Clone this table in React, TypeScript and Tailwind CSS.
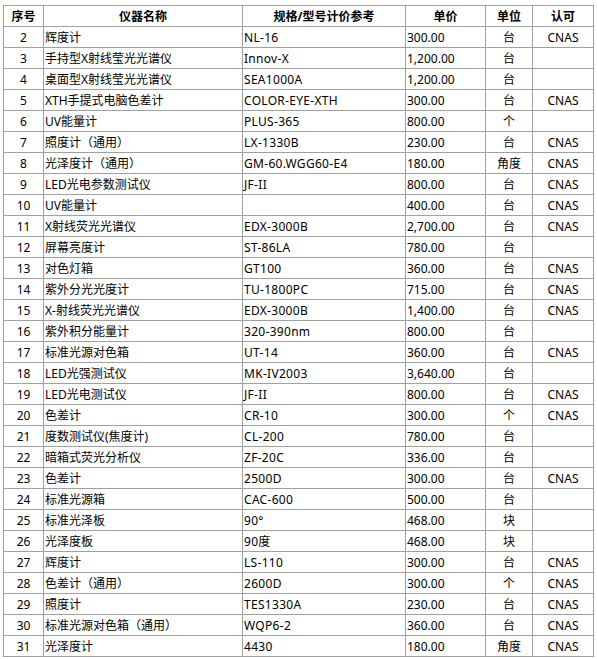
const rows: [string, string, string, string, string, string][] = [
  ['2', '辉度计', 'NL-16', '300.00', '台', 'CNAS'],
  ['3', '手持型X射线莹光光谱仪', 'Innov-X', '1,200.00', '台', ''],
  ['4', '桌面型X射线莹光光谱仪', 'SEA1000A', '1,200.00', '台', ''],
  ['5', 'XTH手提式电脑色差计', 'COLOR-EYE-XTH', '300.00', '台', 'CNAS'],
  ['6', 'UV能量计', 'PLUS-365', '800.00', '个', ''],
  ['7', '照度计（通用）', 'LX-1330B', '230.00', '台', 'CNAS'],
  ['8', '光泽度计（通用）', 'GM-60.WGG60-E4', '180.00', '角度', 'CNAS'],
  ['9', 'LED光电参数测试仪', 'JF-II', '800.00', '台', 'CNAS'],
  ['10', 'UV能量计', '', '400.00', '台', 'CNAS'],
  ['11', 'X射线荧光光谱仪', 'EDX-3000B', '2,700.00', '台', 'CNAS'],
  ['12', '屏幕亮度计', 'ST-86LA', '780.00', '台', ''],
  ['13', '对色灯箱', 'GT100', '360.00', '台', 'CNAS'],
  ['14', '紫外分光光度计', 'TU-1800PC', '715.00', '台', 'CNAS'],
  ['15', 'X-射线荧光光谱仪', 'EDX-3000B', '1,400.00', '台', 'CNAS'],
  ['16', '紫外积分能量计', '320-390nm', '800.00', '台', ''],
  ['17', '标准光源对色箱', 'UT-14', '360.00', '台', 'CNAS'],
  ['18', 'LED光强测试仪', 'MK-IV2003', '3,640.00', '台', ''],
  ['19', 'LED光电测试仪', 'JF-II', '800.00', '台', 'CNAS'],
  ['20', '色差计', 'CR-10', '300.00', '个', 'CNAS'],
  ['21', '度数测试仪(焦度计)', 'CL-200', '780.00', '台', ''],
  ['22', '暗箱式荧光分析仪', 'ZF-20C', '336.00', '台', ''],
  ['23', '色差计', '2500D', '300.00', '台', 'CNAS'],
  ['24', '标准光源箱', 'CAC-600', '500.00', '台', ''],
  ['25', '标准光泽板', '90°', '468.00', '块', ''],
  ['26', '光泽度板', '90度', '468.00', '块', ''],
  ['27', '辉度计', 'LS-110', '300.00', '台', 'CNAS'],
  ['28', '色差计（通用）', '2600D', '300.00', '个', 'CNAS'],
  ['29', '照度计', 'TES1330A', '230.00', '台', 'CNAS'],
  ['30', '标准光源对色箱（通用）', 'WQP6-2', '360.00', '台', 'CNAS'],
  ['31', '光泽度计', '4430', '180.00', '角度', 'CNAS'],
];

const cell = 'border border-[#a0a0a0] h-[21px] p-0 pt-[1px] leading-[19px] whitespace-nowrap overflow-hidden';

export default function App() {
  return (
    <div className="bg-white min-h-[659px] pt-[5px] pl-[3px]">
      <table
        className="table-fixed border-collapse w-[590px] text-[12px] text-black"
        style={{ fontFamily: '"Noto Sans", "Noto Sans CJK SC", sans-serif' }}
      >
        <colgroup>
          <col className="w-[40px]" />
          <col className="w-[199px]" />
          <col className="w-[163px]" />
          <col className="w-[80px]" />
          <col className="w-[47px]" />
          <col className="w-[61px]" />
        </colgroup>
        <thead>
          <tr className="font-bold">
            <th className={`${cell} text-center`}>序号</th>
            <th className={`${cell} text-center`}>仪器名称</th>
            <th className={`${cell} text-center`}>规格/型号计价参考</th>
            <th className={`${cell} text-center`}>单价</th>
            <th className={`${cell} text-center`}>单位</th>
            <th className={`${cell} text-center`}>认可</th>
          </tr>
        </thead>
        <tbody>
          {rows.map(([no, name, spec, price, unit, cert]) => (
            <tr key={no}>
              <td className={`${cell} text-center`}>{no}</td>
              <td className={`${cell} text-left pl-[1px]`}>{name}</td>
              <td className={`${cell} text-left pl-[1px] tracking-[0.3px]`}>{spec}</td>
              <td className={`${cell} text-left pl-[1px]`}>{price}</td>
              <td className={`${cell} text-center`}>{unit}</td>
              <td className={`${cell} text-center`}>{cert}</td>
            </tr>
          ))}
        </tbody>
      </table>
    </div>
  );
}
